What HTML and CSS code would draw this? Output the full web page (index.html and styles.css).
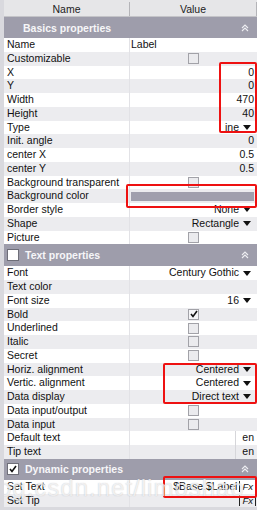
FILE: index.html
```html
<!doctype html>
<html>
<head>
  <meta name="viewport" content="width=device-width, initial-scale=1.0">
  <title>Properties</title>
  <link rel="stylesheet" href="styles.css">
</head>
<body>

  <div id="panel">
    <div class="colhead">
      <div class="hname">Name</div>
      <div class="hvalue">Value</div>
    </div>

    <div class="section">
      <div class="sechead nobox">
        <span class="title">Basics properties</span>
        <svg class="chev" width="8" height="8" viewBox="0 0 8 8"><path d="M1 4 L4 1 L7 4 M1 7 L4 4 L7 7"/></svg>
      </div>
      <div class="row"><div class="name">Name</div><div class="value left">Label</div></div>
      <div class="row"><div class="name">Customizable</div><div class="value center"><span class="box"></span></div></div>
      <div class="row"><div class="name">X</div><div class="value num">0</div></div>
      <div class="row"><div class="name">Y</div><div class="value num">0</div></div>
      <div class="row"><div class="name">Width</div><div class="value num">470</div></div>
      <div class="row"><div class="name">Height</div><div class="value num">40</div></div>
      <div class="row"><div class="name">Type</div><div class="value drop">ine<i class="tri"></i></div></div>
      <div class="row"><div class="name">Init. angle</div><div class="value num">0</div></div>
      <div class="row"><div class="name">center X</div><div class="value num">0.5</div></div>
      <div class="row"><div class="name">center Y</div><div class="value num">0.5</div></div>
      <div class="row"><div class="name">Background transparent</div><div class="value center"><span class="box"></span></div></div>
      <div class="row"><div class="name">Background color</div><div class="value"><span class="swatch"></span></div></div>
      <div class="row"><div class="name">Border style</div><div class="value drop">None<i class="tri"></i></div></div>
      <div class="row"><div class="name">Shape</div><div class="value drop">Rectangle<i class="tri"></i></div></div>
      <div class="row"><div class="name">Picture</div><div class="value center"><span class="box"></span></div></div>
    </div>

    <div class="section">
      <div class="sechead tall">
        <span class="hbox"></span>
        <span class="title">Text properties</span>
        <svg class="chev" width="8" height="8" viewBox="0 0 8 8"><path d="M1 4 L4 1 L7 4 M1 7 L4 4 L7 7"/></svg>
      </div>
      <div class="row"><div class="name">Font</div><div class="value drop">Century Gothic<i class="tri"></i></div></div>
      <div class="row"><div class="name">Text color</div><div class="value"></div></div>
      <div class="row"><div class="name">Font size</div><div class="value drop">16<i class="tri"></i></div></div>
      <div class="row"><div class="name">Bold</div><div class="value center"><span class="box on"><svg width="8" height="8" viewBox="0 0 8 8"><path d="M1 4 L3 6.5 L7 1"/></svg></span></div></div>
      <div class="row"><div class="name">Underlined</div><div class="value center"><span class="box"></span></div></div>
      <div class="row"><div class="name">Italic</div><div class="value center"><span class="box"></span></div></div>
      <div class="row"><div class="name">Secret</div><div class="value center"><span class="box"></span></div></div>
      <div class="row"><div class="name">Horiz. alignment</div><div class="value drop">Centered<i class="tri"></i></div></div>
      <div class="row"><div class="name">Vertic. alignment</div><div class="value drop">Centered<i class="tri"></i></div></div>
      <div class="row"><div class="name">Data display</div><div class="value drop">Direct text<i class="tri"></i></div></div>
      <div class="row"><div class="name">Data input/output</div><div class="value center"><span class="box"></span></div></div>
      <div class="row"><div class="name">Data input</div><div class="value center"><span class="box"></span></div></div>
      <div class="row"><div class="name">Default text</div><div class="value split"><span class="field"></span><span class="lang">en</span></div></div>
      <div class="row"><div class="name">Tip text</div><div class="value split"><span class="field"></span><span class="lang">en</span></div></div>
    </div>

    <div class="section">
      <div class="sechead">
        <span class="hbox"><svg width="8" height="8" viewBox="0 0 8 8"><path d="M1 4 L3 6.5 L7 1"/></svg></span>
        <span class="title">Dynamic properties</span>
        <svg class="chev" width="8" height="8" viewBox="0 0 8 8"><path d="M1 4 L4 1 L7 4 M1 7 L4 4 L7 7"/></svg>
      </div>
      <div class="row"><div class="name">Set Text</div><div class="value fxrow">$Base.$Label<span class="fx">Fx</span></div></div>
      <div class="row"><div class="name">Set Tip</div><div class="value fxrow"><span class="fx">Fx</span></div></div>
    </div>

    <div class="mark mark-type"></div>
    <div class="mark mark-color"></div>
    <div class="mark mark-align"></div>
    <div class="mark mark-set"></div>
    <div class="watermark">og.csdn.net/limoshao</div>
  </div>

</body>
</html>
```

FILE: styles.css
```css
body {
  margin: 0;
  background: #d9d9de;
  font-family: "Liberation Sans", Arial, sans-serif;
  font-size: 10.5px;
  color: #111;
}
#panel {
  position: relative;
  width: 253px;
  height: 510px;
  margin-left: 4px;
  overflow: hidden;
}
.colhead {
  display: grid;
  grid-template-columns: 126px 1fr;
  height: 14px;
  padding-top: 2px;
  background: #e6e6e8;
  border-bottom: 1px solid #c4c4c8;
  line-height: 14px;
  text-align: center;
  color: #222;
}
.hname {
  border-right: 1px solid #b4b4b8;
}
.hvalue {
  border-right: 1px solid #b4b4b8;
}
.sechead {
  display: flex;
  align-items: center;
  height: 21px;
  padding-left: 3px;
  padding-right: 8px;
  background: #9e9dab;
  color: #f6f6f8;
  font-weight: bold;
}
.sechead.tall {
  height: 22px;
}
.sechead.nobox {
  padding-left: 19px;
}
.sechead .title {
  flex: 1;
}
.hbox {
  display: flex;
  align-items: center;
  justify-content: center;
  width: 10px;
  height: 10px;
  margin-right: 6px;
  background: #fff;
  border: 1px solid #6e6e78;
}
.hbox svg path,
.box svg path {
  fill: none;
  stroke: #111;
  stroke-width: 1.6;
}
.chev path {
  fill: none;
  stroke: #eeeef2;
  stroke-width: 1.1;
}
.row {
  display: grid;
  grid-template-columns: 126px 1fr;
  height: 13.75px;
  line-height: 13.75px;
  background: #fff;
}
.row:nth-child(odd) {
  background: #ececef;
}
.name {
  padding-left: 3px;
  white-space: nowrap;
  overflow: hidden;
  border-right: 1px solid #e2e2e6;
}
.value {
  display: flex;
  align-items: center;
  white-space: nowrap;
  overflow: hidden;
}
.value.left {
  padding-left: 1px;
}
.value.num {
  justify-content: flex-end;
  padding-right: 3px;
}
.value.center {
  justify-content: center;
}
.value.drop {
  justify-content: flex-end;
  padding-right: 6px;
}
.tri {
  width: 0;
  height: 0;
  margin-left: 4px;
  border-left: 4.5px solid transparent;
  border-right: 4.5px solid transparent;
  border-top: 5px solid #111;
}
.box {
  display: flex;
  align-items: center;
  justify-content: center;
  width: 9px;
  height: 9px;
  background: #ebebee;
  border: 1px solid #a2a2a8;
}
.box.on {
  background: #f4f4f6;
}
.swatch {
  display: block;
  width: 123px;
  height: 9px;
  margin-left: 1px;
  background: #a09fad;
}
.value.split {
  justify-content: flex-end;
}
.field {
  flex: 1;
  align-self: stretch;
  border-right: 1px solid #d6d6da;
}
.lang {
  width: 18px;
  padding-right: 3px;
  text-align: right;
}
.value.fxrow {
  justify-content: flex-end;
  padding-right: 1px;
}
.fx {
  margin-left: 2px;
  padding: 0 2px;
  height: 11px;
  line-height: 11px;
  border-left: 1px solid #222;
  border-right: 1px solid #222;
  font-style: italic;
  font-size: 9.5px;
}
.mark {
  position: absolute;
  border: 2px solid #ee1111;
  border-radius: 2px;
}
.mark-type {
  left: 215px;
  top: 62px;
  width: 34px;
  height: 67px;
}
.mark-color {
  left: 122px;
  top: 184px;
  width: 127px;
  height: 20px;
}
.mark-align {
  left: 159px;
  top: 363px;
  width: 90px;
  height: 37px;
}
.mark-set {
  left: 159px;
  top: 476px;
  width: 90px;
  height: 18px;
}
.watermark {
  position: absolute;
  left: -6px;
  top: 474px;
  font-size: 24px;
  letter-spacing: 1px;
  white-space: nowrap;
  color: rgba(255, 255, 255, 0.72);
  text-shadow: 0 0 1px rgba(90, 90, 100, 0.35);
  pointer-events: none;
}
```
